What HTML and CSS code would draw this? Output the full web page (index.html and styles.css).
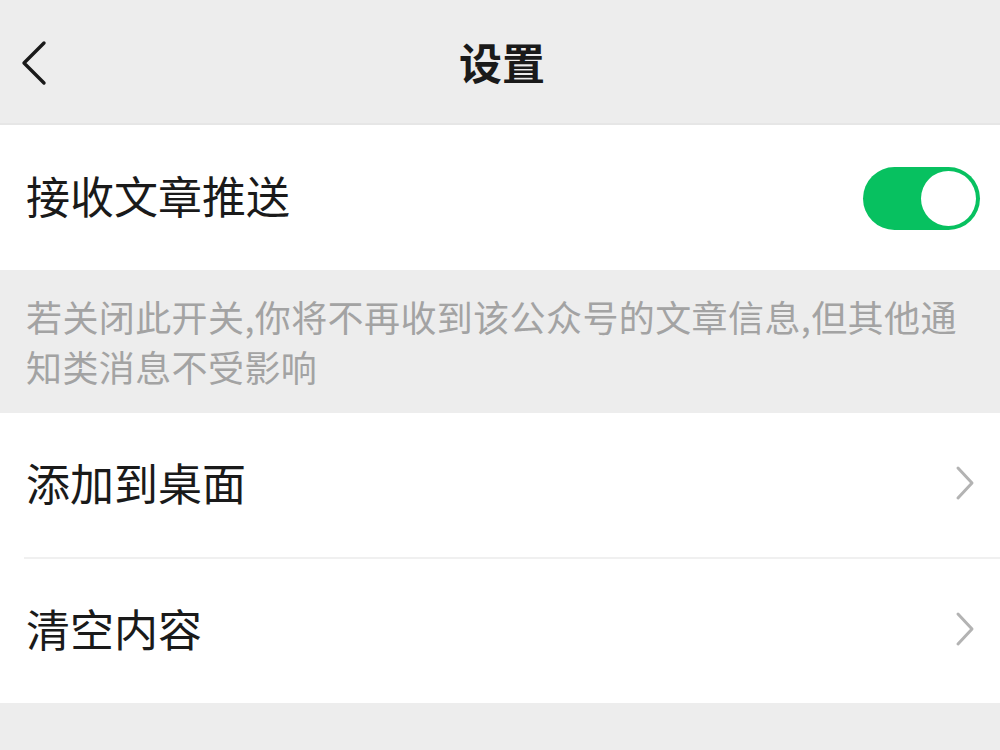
FILE: index.html
```html
<!DOCTYPE html>
<html>
<head>
<meta charset="UTF-8" />
<title>设置</title>
<link rel="stylesheet" href="styles.css">
</head>
<body>
<div class="page">

<div class="topBar">
  <svg class="backIcon" width="30" height="46" viewBox="0 0 30 46">
    <polyline points="25,3 5,23 25,43" fill="none" stroke="#1a1a1a" stroke-width="3.4" stroke-linecap="round" stroke-linejoin="round"/>
  </svg>
  <div class="topTitle">设置</div>
</div>

<div class="cell cellSwitch">
  <div class="cellLabel">接收文章推送</div>
  <div class="switchOn"><div class="switchKnob"></div></div>
</div>

<div class="tip">若关闭此开关,你将不再收到该公众号的文章信息,但其他通知类消息不受影响</div>

<div class="group">
  <div class="cell">
    <div class="cellLabel">添加到桌面</div>
    <svg class="arrow" width="20" height="36" viewBox="0 0 20 36">
      <polyline points="3,3 17,18 3,33" fill="none" stroke="#b3b3b3" stroke-width="3" stroke-linecap="round" stroke-linejoin="round"/>
    </svg>
  </div>
  <div class="cell">
    <div class="cellLabel">清空内容</div>
    <svg class="arrow" width="20" height="36" viewBox="0 0 20 36">
      <polyline points="3,3 17,18 3,33" fill="none" stroke="#b3b3b3" stroke-width="3" stroke-linecap="round" stroke-linejoin="round"/>
    </svg>
  </div>
</div>

</div>
</body>
</html>
```

FILE: styles.css
```css
html, body{
margin: 0;
padding: 0;
}

body{
background: #ededed;
font-family: "Noto Sans CJK SC", "Noto Sans", sans-serif;
color: #1a1a1a;
}

.page{
width: 1000px;
height: 750px;
overflow: hidden;
}

.topBar{
height: 123px;
border-bottom: 2px solid #e6e6e6;
display: flex;
align-items: center;
justify-content: center;
position: relative;
}

.backIcon{
position: absolute;
left: 19px;
top: 40px;
}

.topTitle{
font-size: 43px;
font-weight: 700;
margin-top: -2px;
margin-left: 4px;
}

.cell{
height: 144px;
background: #fff;
display: flex;
align-items: center;
justify-content: space-between;
padding: 0 25px 0 26px;
}

.cellSwitch{
height: 145px;
padding-right: 20px;
}

.cellLabel{
font-size: 44px;
line-height: 1;
margin-top: -6px;
}

.switchOn{
width: 117px;
height: 63px;
border-radius: 32px;
background: #07c160;
display: flex;
align-items: center;
justify-content: flex-end;
padding-right: 4px;
box-sizing: border-box;
margin-top: 2px;
}

.switchKnob{
width: 55px;
height: 55px;
border-radius: 50%;
background: #fff;
}

.tip{
height: 143px;
box-sizing: border-box;
padding: 21px 12px 0 26px;
font-size: 36px;
letter-spacing: 0.4px;
line-height: 50px;
color: #a3a3a3;
}

.group{
background: #fff;
}

.group .cell + .cell{
border-top: 2px solid #f0f0f0;
margin-left: 24px;
padding-left: 2px;
}

.arrow{
margin-top: -4px;
}
```
